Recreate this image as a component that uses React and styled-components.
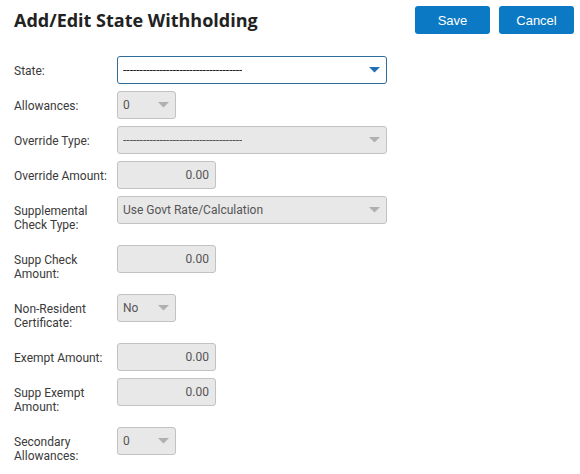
import React from "react";
import styled, { createGlobalStyle } from "styled-components";

const GlobalStyle = createGlobalStyle`
	body {
		margin: 0;
		background: #fff;
		font-family: Roboto, "Liberation Sans", Arial, sans-serif;
		color: #333;
	}
`;

const DASHES = "------------------------------------";

const fields = [
	{ label: "State:", kind: "select", size: "full", value: DASHES, active: true },
	{ label: "Allowances:", kind: "select", size: "small", value: "0" },
	{ label: "Override Type:", kind: "select", size: "full", value: DASHES },
	{ label: "Override Amount:", kind: "amount", value: "0.00" },
	{ label: "Supplemental Check Type:", kind: "select", size: "full", value: "Use Govt Rate/Calculation" },
	{ label: "Supp Check Amount:", kind: "amount", value: "0.00" },
	{ label: "Non-Resident Certificate:", kind: "select", size: "small", value: "No" },
	{ label: "Exempt Amount:", kind: "amount", value: "0.00" },
	{ label: "Supp Exempt Amount:", kind: "amount", value: "0.00" },
	{ label: "Secondary Allowances:", kind: "select", size: "small", value: "0" },
];

const Arrow = ({ active }) => (
	<svg width="11" height="6" viewBox="0 0 11 6">
		<path d="M0 0 L11 0 L5.5 5.5 Z" fill={active ? "#1f6fb2" : "#b0b0b0"} />
	</svg>
);

const App = () => {
	return (
		<Page>
			<GlobalStyle />
			<Header>
				<Title>Add/Edit State Withholding</Title>
				<Actions>
					<Button>Save</Button>
					<Button>Cancel</Button>
				</Actions>
			</Header>
			<Form>
				{fields.map((f) => (
					<Row key={f.label}>
						<Label>{f.label}</Label>
						{f.kind === "select" ? (
							<Select size={f.size} active={f.active}>
								<Value active={f.active}>{f.value}</Value>
								<Arrow active={f.active} />
							</Select>
						) : (
							<Amount>{f.value}</Amount>
						)}
					</Row>
				))}
			</Form>
		</Page>
	);
};

export default App;

const Page = styled.div`
	width: 580px;
	height: 474px;
	overflow: hidden;
`;
const Header = styled.div`
	display: flex;
	align-items: center;
	justify-content: space-between;
	padding: 6px 6px 0 14px;
`;
const Title = styled.h1`
	margin: 0;
	font-family: "Open Sans", "Liberation Sans", sans-serif;
	font-weight: 700;
	font-size: 18px;
	color: #222;
`;
const Actions = styled.div`
	display: flex;
	gap: 9px;
`;
const Button = styled.button`
	width: 75px;
	height: 28px;
	border: none;
	border-radius: 3px;
	background-color: #0b79c3;
	color: #fff;
	font-family: "Liberation Sans", Arial, sans-serif;
	font-size: 13px;
	padding: 0;
`;
const Form = styled.div`
	padding: 22px 0 0 14px;
	display: flex;
	flex-direction: column;
	gap: 7px;
`;
const Row = styled.div`
	display: grid;
	grid-template-columns: 103px auto;
	align-items: start;
`;
const Label = styled.div`
	font-size: 12px;
	line-height: 14px;
	padding: 8px 8px 6px 0;
	color: #3a3a3a;
`;
const Field = styled.div`
	box-sizing: border-box;
	height: 28px;
	border-radius: 3px;
	font-size: 12px;
	display: flex;
	align-items: center;
`;
const Select = styled(Field)`
	width: ${(p) => (p.size === "small" ? "59px" : "270px")};
	justify-content: space-between;
	padding: 0 6px 0 5px;
	border: 1px solid ${(p) => (p.active ? "#2d6d9c" : "#c2c2c2")};
	background: ${(p) => (p.active ? "#fff" : "#e8e8e8")};
`;
const Value = styled.span`
	color: ${(p) => (p.active ? "#222" : "#555")};
	white-space: nowrap;
	overflow: hidden;
`;
const Amount = styled(Field)`
	width: 99px;
	justify-content: flex-end;
	padding-right: 6px;
	border: 1px solid #c2c2c2;
	background: #e8e8e8;
	color: #555;
`;
